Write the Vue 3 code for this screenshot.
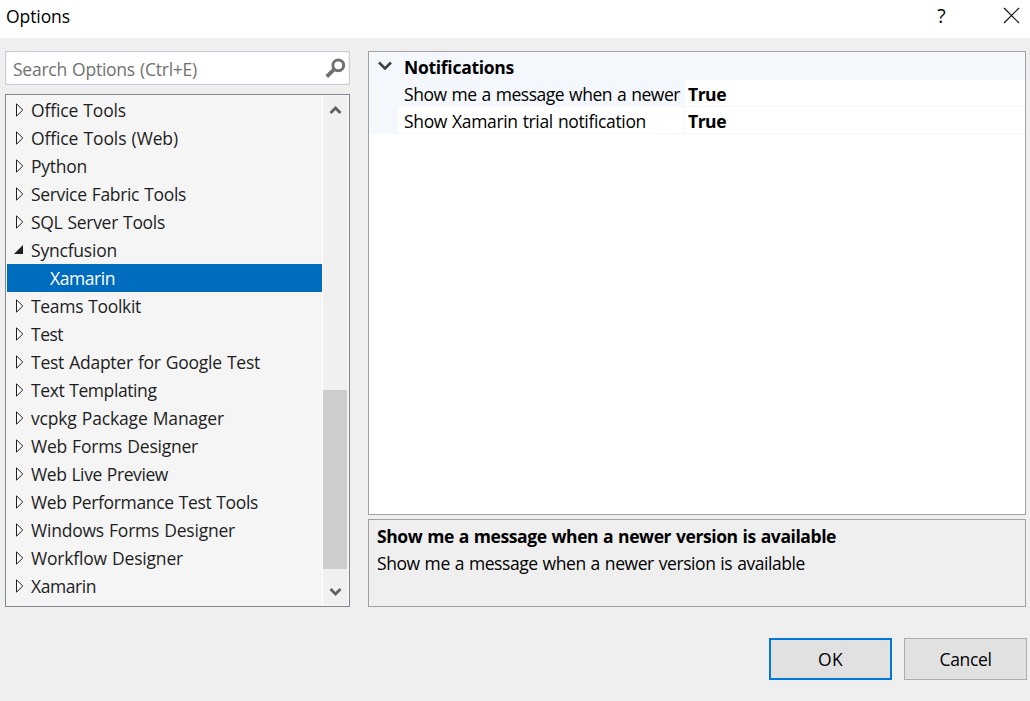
<script setup>
import { ref } from 'vue'

const items = [
  { label: 'Office Tools', w: 95 },
  { label: 'Office Tools (Web)', w: 147 },
  { label: 'Python', w: 56 },
  { label: 'Service Fabric Tools', w: 155 },
  { label: 'SQL Server Tools', w: 134 },
  { label: 'Syncfusion', w: 86, open: true },
  { label: 'Xamarin', w: 65, child: true },
  { label: 'Teams Toolkit', w: 110 },
  { label: 'Test', w: 32 },
  { label: 'Test Adapter for Google Test', w: 229 },
  { label: 'Text Templating', w: 125.5 },
  { label: 'vcpkg Package Manager', w: 193 },
  { label: 'Web Forms Designer', w: 167 },
  { label: 'Web Live Preview', w: 137 },
  { label: 'Web Performance Test Tools', w: 227 },
  { label: 'Windows Forms Designer', w: 204 },
  { label: 'Workflow Designer', w: 152 },
  { label: 'Xamarin', w: 65 },
]
const selected = ref(6)

// Tracks a label so that it fills the given width in pixels.
const vFit = {
  mounted(el, { value }) {
    const natural = el.getBoundingClientRect().width
    el.style.letterSpacing = `${(value - natural) / el.textContent.length}px`
  },
}
</script>

<template>
  <div class="dialog">
    <header class="titlebar">
      <span v-fit="64" class="title">Options</span>
      <span class="help">?</span>
      <svg class="close" width="17" height="17" viewBox="0 0 17 17"><path d="M1 1 16 16M16 1 1 16" /></svg>
    </header>

    <main class="body">
      <section class="left">
        <div class="search">
          <span v-fit="184">Search Options (Ctrl+E)</span>
          <svg width="21" height="21" viewBox="0 0 21 21">
            <circle cx="13.3" cy="7.3" r="5.4" /><path d="M9.3 11.2 1.8 18.6" />
          </svg>
        </div>
        <div class="tree">
          <ul>
            <li
              v-for="(item, i) in items"
              :key="i"
              :class="{ child: item.child, selected: i === selected }"
              @click="selected = i"
            >
              <svg v-if="!item.child" class="twist" width="12" height="14" viewBox="0 0 12 14">
                <path v-if="item.open" class="solid" d="M0 11H9V2Z" />
                <path v-else class="hollow" d="M2.5 .9V13.1L8.8 7Z" />
              </svg>
              <span v-fit="item.w">{{ item.label }}</span>
            </li>
          </ul>
          <div class="scroll">
            <svg class="up" width="12" height="10" viewBox="0 0 12 10"><path d="M1 8 6 3 11 8" /></svg>
            <div class="thumb"></div>
            <svg class="down" width="12" height="10" viewBox="0 0 12 10"><path d="M1 2 6 7 11 2" /></svg>
          </div>
        </div>
      </section>

      <section class="right">
        <div class="grid">
          <div class="category">
            <svg width="14" height="10" viewBox="0 0 14 10"><path d="M1 1.5 7 7.5 13 1.5" /></svg>
            <b v-fit="110">Notifications</b>
          </div>
          <div class="prop active">
            <div class="name"><span v-fit="276">Show me a message when a newer</span></div>
            <div class="value"><b v-fit="38">True</b></div>
          </div>
          <div class="prop">
            <div class="name"><span v-fit="242">Show Xamarin trial notification</span></div>
            <div class="value"><b v-fit="38">True</b></div>
          </div>
        </div>
        <div class="description">
          <p><b v-fit="459">Show me a message when a newer version is available</b></p>
          <p><span v-fit="428">Show me a message when a newer version is available</span></p>
        </div>
      </section>
    </main>

    <footer class="buttons">
      <button class="default"><span v-fit="25">OK</span></button>
      <button><span v-fit="52">Cancel</span></button>
    </footer>
  </div>
</template>

<style>
body { background: #efefef; overflow: hidden; }
</style>

<style scoped>
* { box-sizing: border-box; }
.dialog {
  width: 1030px;
  height: 701px;
  display: flex;
  flex-direction: column;
  background: #efefef;
  color: #000;
  font: 17.5px/28px "Open Sans", "Noto Sans", sans-serif;
  word-spacing: 0.8px;
  white-space: nowrap;
}
.titlebar { height: 38px; display: flex; background: #fff; padding: 2px 10px 0 6px; }
.title { margin-right: auto; }
.help { width: 9px; margin-right: 57px; font-size: 20.5px; line-height: 27px; transform: scaleX(0.95); }
.close { margin-top: 5px; fill: none; stroke: #111; stroke-width: 1.2; }
.body { display: flex; gap: 18px; padding: 13px 4px 0 5px; height: 569px; }
.left { width: 345px; display: flex; flex-direction: column; gap: 9px; }
.search {
  height: 34px;
  border: 1px solid #cccedb;
  box-shadow: inset 0 0 0 1px #f3f3f8;
  background: #fff;
  color: #717171;
  display: flex;
  justify-content: space-between;
  align-items: flex-start;
  padding: 3px 3px 0 7px;
}
.search svg { margin-top: 3px; fill: none; stroke: #717171; stroke-width: 3; }
.search path { stroke-width: 3.8; }
.tree { height: 513px; border: 1px solid #828790; background: #f5f5f5; padding: 1px; display: flex; color: #1e1e1e; }
ul { list-style: none; margin: 0; padding: 0; width: 316px; border-right: 1px solid #fff; }
li { height: 28px; display: flex; align-items: center; padding-left: 6px; padding-bottom: 1px; }
.twist { margin: 1px 5px 0 1px; }
.hollow { fill: #fff; stroke: #1e1e1e; stroke-width: 1; }
.solid { fill: #1e1e1e; }
li.child { padding-left: 43px; }
li.selected { background: #006cbe; color: #fff; }
.scroll { width: 24px; background: #f0f0f0; display: flex; flex-direction: column; align-items: center; }
.scroll svg { fill: none; stroke: #606060; stroke-width: 2.8; flex: none; transform: translateX(0.5px); }
.up { margin-top: 9px; }
.thumb { width: 24px; height: 179px; margin-top: 275px; background: #cdcdcd; }
.down { margin-top: 18px; }
.right { width: 658px; display: flex; flex-direction: column; gap: 4px; }
.grid { height: 464px; border: 1px solid #a0a0a0; background: #fff; }
.category { height: 28px; background: #f4f7fc; display: flex; padding: 1px 0 0 9px; gap: 12px; }
.category svg { margin-top: 8px; fill: none; stroke: #404040; stroke-width: 2.6; }
.prop { height: 27px; display: flex; border-left: 29px solid #f4f7fc; line-height: 28px; }
.name { width: 287px; border-right: 1px solid #f4f7fc; border-bottom: 1px solid #f4f7fc; padding-left: 6px; }
.value { flex: 1; border-bottom: 1px solid #f6f6f7; padding-left: 3px; }
.active .name { background: #f4f7fc; }
.description { height: 88px; border: 1px solid #a0a0a0; padding: 2px 8px; }
.description p { margin: 0; height: 27px; }
.buttons { display: flex; gap: 12px; padding: 31px 3px 0; justify-content: flex-end; }
button {
  width: 123px;
  height: 42px;
  border: 1px solid #adadad;
  border-radius: 0;
  background: #e1e1e1;
  font: inherit;
  color: #000;
  padding: 0;
}
button.default { border: 2px solid #0078d7; }
</style>
